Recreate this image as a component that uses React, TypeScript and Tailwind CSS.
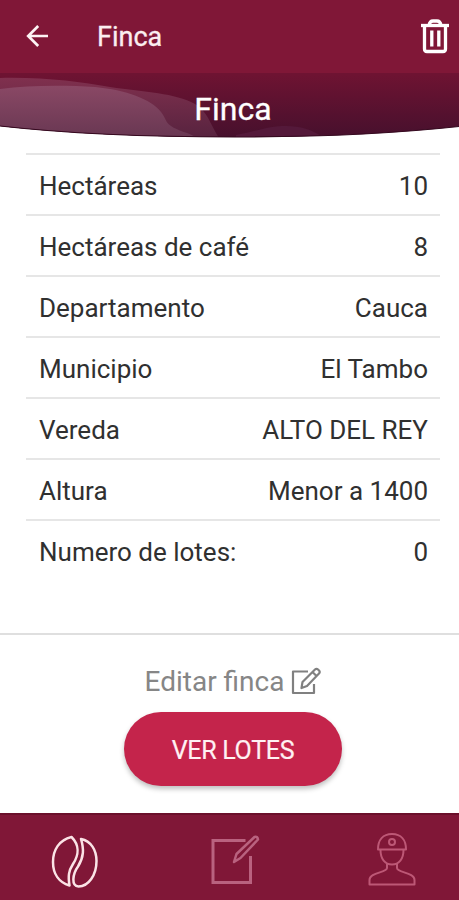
import type { ReactNode } from "react";

type Detail = {
  label: string;
  value: string;
};

const details: Detail[] = [
  { label: "Hectáreas", value: "10" },
  { label: "Hectáreas de café", value: "8" },
  { label: "Departamento", value: "Cauca" },
  { label: "Municipio", value: "El Tambo" },
  { label: "Vereda", value: "ALTO DEL REY" },
  { label: "Altura", value: "Menor a 1400" },
  { label: "Numero de lotes:", value: "0" },
];

function TopBar() {
  return (
    <header className="flex h-[73px] shrink-0 items-center bg-[#801737] pl-[26px] pr-[9px]">
      <button aria-label="Volver">
        <svg width="24" height="24" viewBox="0 0 24 24" fill="none" stroke="#fdf3f4" strokeWidth="2.7" className="mt-[-2px]">
          <path d="M22 12H3M12.200 2 2.200 12l10 10" />
        </svg>
      </button>
      <h1 className="ml-[47px] flex-1 text-[27px] font-normal leading-8 text-[#fbeef0] [-webkit-text-stroke:0.3px]">
        Finca
      </h1>
      <button aria-label="Eliminar">
        <svg width="30" height="36" viewBox="0 0 30 36" fill="none" stroke="#fff" strokeWidth="3.3" strokeLinejoin="round" className="mt-[-2px]">
          <path d="M1 7.500h28" />
          <path d="M9 7.500c.5-3 2-4.500 4-4.500h4c2 0 3.500 1.500 4 4.500" />
          <path d="M4.500 8v23q0 2.500 2.500 2.500h16q2.500 0 2.500-2.500V8" />
          <path d="M11.800 12.500v16M18.800 12.500v16" />
        </svg>
      </button>
    </header>
  );
}

function Banner() {
  return (
    <div className="relative h-[65px] shrink-0">
      <svg className="absolute inset-0" width="459" height="65" viewBox="0 0 459 65">
        <defs>
          <linearGradient id="base" x1="0" y1="0" x2="0" y2="1">
            <stop offset="0" stopColor="#6f1332" />
            <stop offset="1" stopColor="#46102d" />
          </linearGradient>
          <linearGradient id="back" x1="0" y1="0" x2="0" y2="1">
            <stop offset="0" stopColor="#80304e" />
            <stop offset="1" stopColor="#57233f" />
          </linearGradient>
          <linearGradient id="front" x1="0" y1="0" x2="0" y2="1">
            <stop offset="0" stopColor="#8a4865" />
            <stop offset="1" stopColor="#683752" />
          </linearGradient>
          <clipPath id="curve">
            <path d="M0 0H459V53.500C390 61 320 64 235 64C150 64 70 61 0 53Z" />
          </clipPath>
        </defs>
        <g clipPath="url(#curve)">
          <path d="M0 0H459V65H0Z" fill="url(#base)" />
          <path d="M0 5C45 4 80 9 110 14C145 19 175 20 195 31C208 39 210 51 219 65H0Z" fill="url(#back)" />
          <path d="M0 16C30 12 65 12 95 14C126 17 151 26 161 39C166 45 165 49 171 53C178 58 190 60 197 65H0Z" fill="url(#front)" />
          <path d="M236 62C260 57 270 53 286 53C302 53 312 57 325 65H236Z" fill="#54193a" />
        </g>
        <path d="M0 53C70 61 150 64 235 64C320 64 390 61 459 53.500" fill="none" stroke="#35091f" strokeWidth="1.200" />
      </svg>
      <h2 className="relative pl-[7px] pt-[17px] text-center text-[32px] font-normal leading-[38px] text-white [-webkit-text-stroke:0.3px]">
        Finca
      </h2>
    </div>
  );
}

function DetailRow({ label, value }: Detail) {
  return (
    <div className="flex h-[61px] items-center justify-between border-t-2 border-[#e6e6e6] pl-[13px] pr-3 pt-[3px] text-[26px] text-[#303030]">
      <span>{label}</span>
      <span>{value}</span>
    </div>
  );
}

function NavItem({ label, children }: { label: string; children: ReactNode }) {
  return (
    <button aria-label={label} className="flex flex-1 justify-center">
      {children}
    </button>
  );
}

function BottomNav() {
  return (
    <nav className="flex h-[87px] shrink-0 border-t-2 border-[#6b102b] bg-[#801737] pt-[17px]">
      <NavItem label="Fincas">
        <svg width="50" height="60" viewBox="0 0 50 60" fill="none" stroke="#fbe3e6" strokeWidth="2.500" strokeLinejoin="round" className="ml-[-3px] mt-px">
          <path d="M21.500 4C9 7 3 17 3 29c0 12 6 20.500 16.500 23.500C18 43 18.500 38 23 31c6-9 6.500-19-1.500-27Z" />
          <path d="M31 6C41 8 46.500 17 46.500 28c0 14-8 25.500-18 25.500C21 53.500 22.500 41 28 33.500C34 24 34 16 31 6Z" />
        </svg>
      </NavItem>
      <NavItem label="Registros">
        <svg width="52" height="60" viewBox="0 0 52 60" fill="none" stroke="#b9627f" strokeWidth="3" className="ml-[11px]">
          <path d="M36.500 8.500H4V50.500H41.500V24" />
          <path d="m25 30 2.500-8L45.500 5q3-1 3.500 2.500L31.500 26Z" strokeWidth="2.500" strokeLinejoin="round" />
        </svg>
      </NavItem>
      <NavItem label="Perfil">
        <svg width="50" height="60" viewBox="0 0 50 60" fill="none" stroke="#bd5876" strokeWidth="2" strokeLinejoin="round" className="ml-[18px]">
          <path d="M11 17.500C11 8 16 2 25 2s14 6 14 15.500Z" />
          <circle cx="25" cy="10" r="3" />
          <path d="M13.500 18c0 9 4.500 14.500 11.500 14.500S36.500 27 36.500 18" />
          <path d="M20 31v5c0 5-17.500 4-17.500 12v4.500h45V48c0-8-17.500-7-17.500-12v-5" />
        </svg>
      </NavItem>
    </nav>
  );
}

export default function App() {
  return (
    <div className="flex h-[900px] w-[459px] flex-col overflow-hidden bg-white font-['Roboto',sans-serif]">
      <TopBar />
      <Banner />
      <main className="flex-1 pl-[26px] pr-[19px] pt-[15px]">
        {details.map((detail) => (
          <DetailRow key={detail.label} {...detail} />
        ))}
      </main>
      <section className="flex h-[180px] shrink-0 flex-col items-center border-t-2 border-[#dfdfdf] pl-[7px] pt-[29px]">
        <button className="flex items-center text-[28px] leading-9 text-[#868686]">
          Editar finca
          <svg width="30" height="28" viewBox="0 0 30 28" fill="none" stroke="#808080" strokeWidth="2.2" strokeLinejoin="round" className="ml-[7px] mt-[-2px]">
            <path d="M17 4.500H2V26H23V17" />
            <path d="m10.500 21 1-6L24 2.500q1.500-1.500 3 0l1 1q1.500 1.500 0 3L16 19ZM21.500 5l4 4" />
          </svg>
        </button>
        <button className="mt-[12px] h-[74px] w-[218px] rounded-full bg-[#c4244b] pt-[4px] text-[25px] font-normal tracking-[-0.3px] text-[#fff1f3] shadow-[0_3px_5px_rgba(0,0,0,0.25)] [-webkit-text-stroke:0.2px]">
          VER LOTES
        </button>
      </section>
      <BottomNav />
    </div>
  );
}
